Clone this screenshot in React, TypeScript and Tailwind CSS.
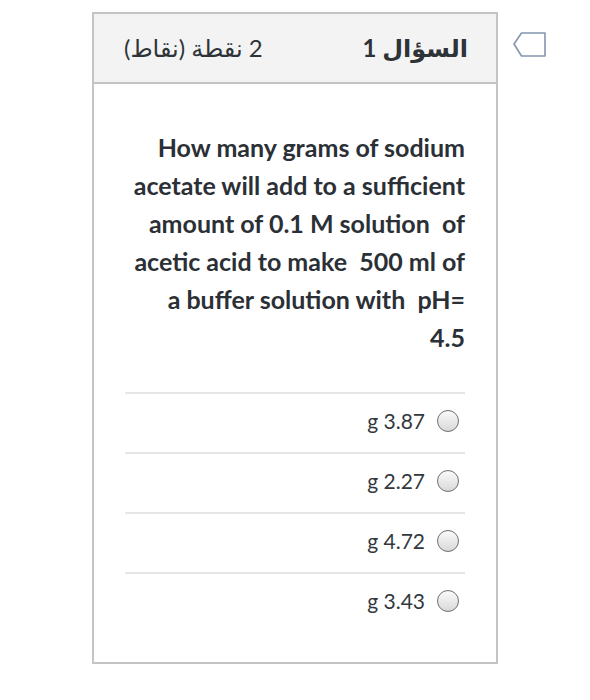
import React from 'react';

const options = ['3.87', '2.27', '4.72', '3.43'];

const FlagIcon = () => (
	<svg width="36" height="28" viewBox="0 0 36 28" className="block">
		<path d="M2 13 L9.5 2 L33 2 L33 25 L9.5 25 Z" fill="none" stroke="#8397ad" strokeWidth="1.6" strokeLinejoin="round" />
	</svg>
);

const Radio = () => (
	<span className="inline-block w-[22px] h-[22px] rounded-full border border-[#6f6f6f] bg-gradient-to-b from-[#fafafa] to-[#d9d9d9]" />
);

export default function App() {
	return (
		<div className="bg-white w-[590px] h-[700px] flex items-start" style={{ fontFamily: 'Lato, "DejaVu Sans", sans-serif' }}>
			<div className="ml-[92px] mt-[12px] w-[406px] h-[652px] border-2 border-[#c4c4c4] flex flex-col">
				<div dir="rtl" className="h-[70px] bg-[#f3f3f3] border-b-2 border-[#c4c4c4] flex items-center justify-between pr-[28px] pl-[30px] text-[#2e3338]">
					<span className="text-[24px] font-bold">السؤال 1</span>
					<span className="text-[24px]">2 نقطة (نقاط)</span>
				</div>
				<div className="px-[31px] pt-[44px] flex flex-col">
					<p className="text-right text-[25px] font-bold leading-[38px] text-[#2b3036] whitespace-pre">
						{'How many grams of sodium\nacetate will add to a sufficient\namount of 0.1 M solution  of\nacetic acid to make  500 ml of\na buffer solution with  pH=\n4.5'}
					</p>
					<div className="mt-[36px] flex flex-col">
						{options.map((o) => (
							<div key={o} className="h-[60px] border-t-2 border-[#e6e6e6] flex items-center justify-end gap-[12px] pr-[6px] pb-[4px]">
								<span className="text-[21px] text-[#33383d]">g {o}</span>
								<Radio />
							</div>
						))}
					</div>
				</div>
			</div>
			<div className="ml-[14px] mt-[31px]">
				<FlagIcon />
			</div>
		</div>
	);
}
